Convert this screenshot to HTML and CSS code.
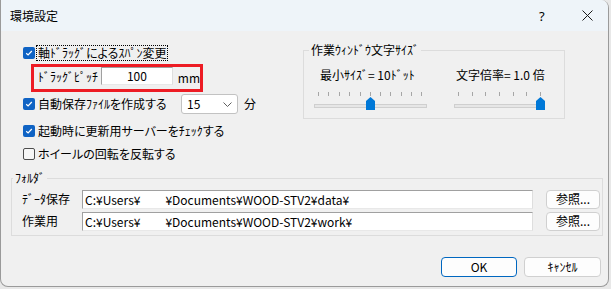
FILE: index.html
```html
<!DOCTYPE html>
<html lang="ja">
<head>
  <meta charset="UTF-8" />
  <title>環境設定</title>
  <link rel="stylesheet" href="styles.css">
</head>
<body>
  <div class="window">
    <div class="titlebar">
      <span class="title">環境設定</span>
      <span class="help">?</span>
      <svg class="close" width="11" height="11" viewBox="0 0 11 11">
        <path d="M0.5 0.5 10.5 10.5 M10.5 0.5 0.5 10.5" stroke="#1a1a1a" stroke-width="1" fill="none"/>
      </svg>
    </div>

    <div class="top">
      <div class="options">
        <div class="opt opt-span">
          <span class="check on"><svg width="12" height="12" viewBox="0 0 12 12"><path d="M3.2 6.2 5.1 8 8.8 4" fill="none" stroke="#fff" stroke-width="1.2"/></svg></span>
          <span class="lbl focus">軸ﾄﾞﾗｯｸﾞによるｽﾊﾟﾝ変更</span>
        </div>

        <div class="pitch">
          <span class="pitch-label">ﾄﾞﾗｯｸﾞﾋﾟｯﾁ</span>
          <span class="edit num">100</span>
          <span class="unit">mm</span>
        </div>

        <div class="opt opt-auto">
          <span class="check on"><svg width="12" height="12" viewBox="0 0 12 12"><path d="M3.2 6.2 5.1 8 8.8 4" fill="none" stroke="#fff" stroke-width="1.2"/></svg></span>
          <span class="lbl">自動保存ﾌｧｲﾙを作成する</span>
          <span class="combo">15
            <svg class="chevron" width="9" height="5" viewBox="0 0 9 5"><path d="M0.5 0.5 4.5 4.5 8.5 0.5" fill="none" stroke="#5f5f5f" stroke-width="1"/></svg>
          </span>
          <span class="unit-min">分</span>
        </div>

        <div class="opt opt-update">
          <span class="check on"><svg width="12" height="12" viewBox="0 0 12 12"><path d="M3.2 6.2 5.1 8 8.8 4" fill="none" stroke="#fff" stroke-width="1.2"/></svg></span>
          <span class="lbl">起動時に更新用サーバーをﾁｪｯｸする</span>
        </div>

        <div class="opt opt-wheel">
          <span class="check off"></span>
          <span class="lbl">ホイールの回転を反転する</span>
        </div>
      </div>

      <fieldset class="group font-group">
        <legend>作業ｳｨﾝﾄﾞｳ文字ｻｲｽﾞ</legend>
        <div class="sliders">
          <div class="slider-col col-min">
            <span class="slider-label">最小ｻｲｽﾞ= 10ﾄﾞｯﾄ</span>
            <svg class="slider" width="113" height="22" viewBox="0 0 113 22">
              <g fill="#a6a6a6">
                <rect x="4" y="2" width="1" height="4"/>
                <rect x="14" y="2" width="1" height="4"/>
                <rect x="25" y="2" width="1" height="4"/>
                <rect x="35" y="2" width="1" height="4"/>
                <rect x="46" y="2" width="1" height="4"/>
                <rect x="56" y="2" width="1" height="4"/>
                <rect x="66" y="2" width="1" height="4"/>
                <rect x="76" y="2" width="1" height="4"/>
                <rect x="87" y="2" width="1" height="4"/>
                <rect x="97" y="2" width="1" height="4"/>
                <rect x="107" y="2" width="1" height="4"/>
              </g>
              <rect x="0.5" y="14.5" width="112" height="3" fill="#e6e6e6" stroke="#cfcfcf"/>
              <path d="M52 11 L56.5 7 L61 11 V20 H52 Z" fill="#0078d7"/>
            </svg>
          </div>
          <div class="slider-col col-scale">
            <span class="slider-label">文字倍率= 1.0 倍</span>
            <svg class="slider" width="92" height="22" viewBox="0 0 92 22">
              <g fill="#a6a6a6">
                <rect x="4" y="2" width="1" height="4"/>
                <rect x="18" y="2" width="1" height="4"/>
                <rect x="31" y="2" width="1" height="4"/>
                <rect x="45" y="2" width="1" height="4"/>
                <rect x="59" y="2" width="1" height="4"/>
                <rect x="72" y="2" width="1" height="4"/>
                <rect x="86" y="2" width="1" height="4"/>
              </g>
              <rect x="0.5" y="14.5" width="90" height="3" fill="#e6e6e6" stroke="#cfcfcf"/>
              <path d="M82 11 L86.5 7 L91 11 V20 H82 Z" fill="#0078d7"/>
            </svg>
          </div>
        </div>
      </fieldset>
    </div>

    <fieldset class="group folders">
      <legend>ﾌｫﾙﾀﾞ</legend>
      <div class="folder-rows">
        <div class="folder-row">
          <span class="folder-label">ﾃﾞｰﾀ保存</span>
          <span class="edit path">C:¥Users¥<span class="blank"></span>¥Documents¥WOOD-STV2¥data¥</span>
          <button class="btn browse">参照...</button>
        </div>
        <div class="folder-row">
          <span class="folder-label">作業用</span>
          <span class="edit path">C:¥Users¥<span class="blank"></span>¥Documents¥WOOD-STV2¥work¥</span>
          <button class="btn browse">参照...</button>
        </div>
      </div>
    </fieldset>

    <div class="actions">
      <button class="btn default">OK</button>
      <button class="btn cancel">ｷｬﾝｾﾙ</button>
    </div>
  </div>
</body>
</html>
```

FILE: styles.css
```css
* {
  box-sizing: border-box;
  margin: 0;
  padding: 0;
}

body {
  background-color: #e8e8e8;
  font-family: "Noto Sans CJK JP", "Noto Sans", sans-serif;
  font-size: 12px;
  line-height: 14px;
  color: #000;
  font-feature-settings: "palt";
}

.window {
  width: 609px;
  height: 287px;
  background-color: #f0f0f0;
  border: 1px solid #9a9a9a;
  border-top: none;
  border-radius: 0 8px 8px 8px;
  overflow: hidden;
}

.titlebar {
  height: 31px;
  background-color: #eef4f9;
  display: flex;
  align-items: center;
  padding: 0 15px 0 9px;
}

.help {
  margin-left: auto;
  width: 7px;
  font-family: "Noto Sans", sans-serif;
  font-size: 13px;
}

.close {
  margin-left: 36px;
  display: block;
}

/* upper part: check options + font size group */
.top {
  display: flex;
  padding-top: 12px;
}

.options {
  width: 280px;
  margin-left: 22px;
  padding-top: 2px;
  display: flex;
  flex-direction: column;
}

.opt {
  display: flex;
  align-items: center;
  height: 20px;
}

.opt-span {
  height: 16px;
}

.opt-auto {
  margin-top: 2px;
}

.opt-update {
  margin-top: 7px;
}

.opt-wheel {
  margin-top: 3px;
}

.check {
  width: 12px;
  height: 12px;
  border-radius: 2px;
  flex: none;
  display: flex;
}

.check.on {
  background-color: #0f63c4;
}

.check.off {
  border: 1px solid #4d4d4d;
  background-color: #f7f7f7;
}

.lbl {
  margin-left: 2px;
  padding: 0 1px;
  white-space: nowrap;
}

.focus {
  outline: 1px dotted #000;
}

.pitch {
  margin: 3px 0 0 8px;
  width: 172px;
  height: 28px;
  border: 3px solid #ed1c24;
  display: flex;
  align-items: flex-start;
}

.pitch-label {
  width: 69px;
  padding-left: 4px;
  margin-top: 3px;
}

.edit {
  background-color: #fff;
  border: 1px solid;
  border-color: #a0a0a0 #dedede #e8e8e8 #a0a0a0;
  white-space: nowrap;
}

.num {
  width: 74px;
  height: 18px;
  line-height: 16px;
  text-align: center;
}

.unit {
  margin: 4px 0 0 5px;
}

.opt-auto .lbl {
  width: 144px;
}

.combo {
  width: 57px;
  height: 20px;
  background-color: #fff;
  border: 1px solid #c2c2c2;
  border-radius: 3px;
  display: flex;
  align-items: center;
  padding: 0 5px 0 5px;
}

.chevron {
  margin-left: auto;
  display: block;
}

.unit-min {
  margin-left: 6px;
}

/* group boxes */
.group {
  border: 1px solid #dcdcdc;
  padding: 0;
}

.group legend {
  padding: 0 2px;
  line-height: 14px;
}

.font-group {
  width: 262px;
  height: 76px;
}

.font-group legend {
  margin-left: 5px;
}

.sliders {
  display: flex;
  padding: 11px 0 0 10px;
}

.slider-col {
  display: flex;
  flex-direction: column;
}

.col-min {
  width: 140px;
}

.slider-label {
  margin-left: 6px;
  white-space: nowrap;
}

.col-scale .slider-label {
  margin-left: 2px;
}

.slider {
  display: block;
  margin-top: 8px;
}

.folders {
  width: 592px;
  height: 65px;
  margin: 7px 0 0 10px;
}

.folders legend {
  margin-left: 1px;
}

.folder-rows {
  display: flex;
  flex-direction: column;
  gap: 2px;
  padding: 4px 1px 0 10px;
}

.folder-row {
  display: flex;
  align-items: center;
  height: 20px;
}

.folder-label {
  width: 60px;
}

.path {
  width: 451px;
  height: 19px;
  line-height: 17px;
  padding-left: 2px;
}

.blank {
  display: inline-block;
  width: 25px;
}

.btn {
  font-family: inherit;
  font-size: 12px;
  line-height: 14px;
  color: #000;
  background-color: #fdfdfd;
  border: 1px solid #d0d0d0;
  border-radius: 4px;
}

.browse {
  margin-left: 13px;
  width: 54px;
  height: 19px;
}

.actions {
  display: flex;
  justify-content: flex-end;
  gap: 7px;
  padding-right: 7px;
  margin-top: 21px;
}

.default {
  width: 76px;
  height: 20px;
  border-color: #0067c0;
}

.cancel {
  width: 77px;
  height: 20px;
}
```
